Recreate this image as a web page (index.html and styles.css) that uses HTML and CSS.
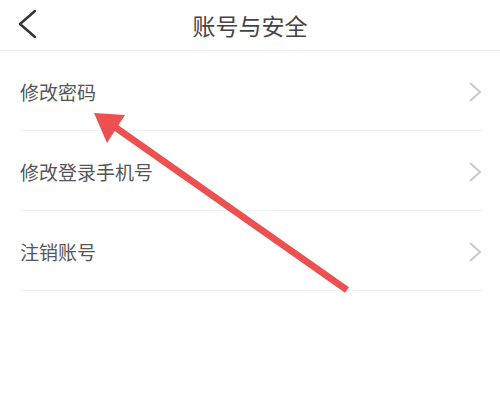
FILE: index.html
```html
<!DOCTYPE html>
<html lang="zh-CN">
<head>
<meta charset="utf-8">
<title>账号与安全</title>
<link rel="stylesheet" href="styles.css">
</head>
<body>
<div class="page">
  <header class="nav">
    <span class="back">
      <svg width="20" height="30" viewBox="0 0 20 30"><polyline points="17,2 2,15 17,28" fill="none" stroke="#333" stroke-width="2.4" stroke-linecap="round" stroke-linejoin="round"/></svg>
    </span>
    <h1 class="title">账号与安全</h1>
  </header>
  <ul class="list">
    <li class="row"><span class="label">修改密码</span><svg class="chev" width="16" height="22" viewBox="0 0 16 22"><polyline points="3,2 13,11 3,20" fill="none" stroke="#c9c9c9" stroke-width="2"/></svg></li>
    <li class="row"><span class="label">修改登录手机号</span><svg class="chev" width="16" height="22" viewBox="0 0 16 22"><polyline points="3,2 13,11 3,20" fill="none" stroke="#c9c9c9" stroke-width="2"/></svg></li>
    <li class="row"><span class="label">注销账号</span><svg class="chev" width="16" height="22" viewBox="0 0 16 22"><polyline points="3,2 13,11 3,20" fill="none" stroke="#c9c9c9" stroke-width="2"/></svg></li>
  </ul>
  <svg class="arrow" width="500" height="410" viewBox="0 0 500 410">
    <line x1="347" y1="290" x2="112" y2="125" stroke="#ec5050" stroke-width="7" stroke-linecap="butt"/>
    <polygon points="94,113 125,115 107,143" fill="#ec5050"/>
  </svg>
</div>
</body>
</html>
```

FILE: styles.css
```css
html, body {
  margin: 0;
  padding: 0;
  background: #fff;
}
body {
  font-family: "Noto Sans CJK SC", "Noto Sans", sans-serif;
}
.page {
  position: relative;
  width: 500px;
  height: 410px;
  overflow: hidden;
}
.nav {
  height: 51px;
  border-bottom: 1px solid #f2f2f2;
  display: flex;
  align-items: center;
  justify-content: center;
  position: relative;
  box-sizing: border-box;
}
.back {
  position: absolute;
  left: 18px;
  top: 9px;
  display: flex;
}
.title {
  margin: 0;
  font-size: 23px;
  font-weight: 400;
  color: #444;
  line-height: 1;
  margin-top: 1px;
}
.list {
  list-style: none;
  margin: 0;
  padding: 0 17px 0 20px;
}
.row {
  height: 80px;
  box-sizing: border-box;
  border-bottom: 1px solid #f2f2f2;
  display: flex;
  align-items: center;
  justify-content: space-between;
  padding-top: 2px;
}
.label {
  font-size: 19px;
  color: #555;
  line-height: 1;
}
.chev {
  display: block;
}
.arrow {
  position: absolute;
  left: 0;
  top: 0;
  pointer-events: none;
}
```
